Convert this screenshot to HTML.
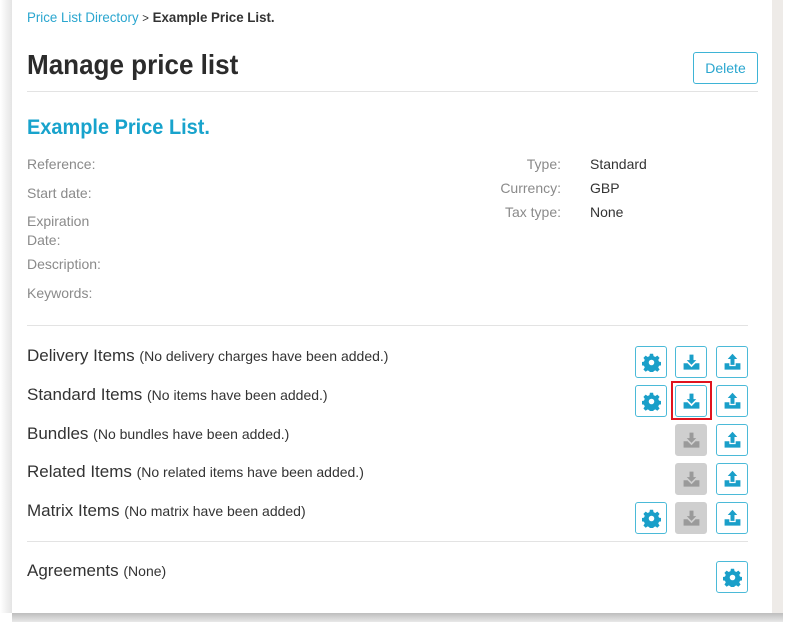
<!DOCTYPE html>
<html><head><meta charset="utf-8"><style>
*{margin:0;padding:0;box-sizing:border-box}
body{width:790px;height:630px;background:#fff;position:relative;overflow:hidden;font-family:"Liberation Sans Narrow","Liberation Sans",sans-serif;color:#333}
.lshadow{position:absolute;left:0;top:0;width:12px;height:613px;background:linear-gradient(90deg,#fff,#e4e4e4)}
.rgray{position:absolute;left:772px;top:0;width:11px;height:613px;background:#eeebe8}
.card{position:absolute;left:12px;top:0;width:760px;height:613px;background:#fff}
.bshadow{position:absolute;left:12px;top:613px;width:771px;height:9px;background:linear-gradient(#bdbdbd,#e8e8e8)}
.a{position:absolute;white-space:nowrap}
.lbl{color:#8a8a8a;font-size:14px}
.val{color:#333;font-size:14px}
.hr{position:absolute;height:1px;background:#e3e3e3}
.row{font-size:17px;color:#333}
.row small{font-size:14px}
.btn{position:absolute;width:32px;height:32px;border:1.5px solid #4bbad8;border-radius:3px;background:#fff;display:flex;align-items:center;justify-content:center}
.btn.dis{background:#cfcfcf;border-color:#cfcfcf}
.sx{transform-origin:0 0;transform:scaleX(.93)}
</style></head><body>
<div class="lshadow"></div><div class="rgray"></div><div class="card"></div><div class="bshadow"></div>
<svg width="0" height="0" style="position:absolute"><defs>
<symbol id="gear" viewBox="0 0 24 24"><path fill="currentColor" d="M10 1h4l.6 3 2.2 1 2.6-1.7 2.8 2.8-1.7 2.6 1 2.2 3 .6v4l-3 .6-1 2.2 1.7 2.6-2.8 2.8-2.6-1.7-2.2 1-.6 3h-4l-.6-3-2.2-1-2.6 1.7-2.8-2.8 1.7-2.6-1-2.2-3-.6v-4l3-.6 1-2.2-1.700-2.6 2.8-2.8 2.6 1.7 2.2-1zM12 8.5a3.5 3.5 0 1 0 0 7 3.5 3.5 0 1 0 0-7z"/></symbol>
<symbol id="dl" viewBox="0 0 24 24"><path fill="currentColor" d="M9.5 2h5v7h3.5l-6 6-6-6h3.5zM2 13h5l5 5 5-5h5v8H2zm14 5h1.5v1.2H16zm2.5 0H20v1.2h-1.5z"/></symbol>
<symbol id="ul" viewBox="0 0 24 24"><path fill="currentColor" d="M12 1l6 6.5h-3.5V15h-5V7.5H6zM2 13h6v3.5h8V13h6v8H2zm14 5h1.5v1.2H16zm2.5 0H20v1.2h-1.5z"/></symbol>
</defs></svg>
<div class="a sx" style="left:27px;top:9px;font-size:14px;transform:scaleX(.95)"><span style="color:#2aa6cf">Price List Directory</span> <span style="font-size:12px">&gt;</span> <b>Example Price List.</b></div>
<div class="a sx" style="left:27px;top:49px;font-size:28px;font-weight:bold;color:#2b2b2b">Manage price list</div>
<div class="a" style="left:693px;top:52px;width:65px;height:32px;border:1px solid #3eb4d6;border-radius:3px;color:#2aa6cf;font-size:14px;text-align:center;line-height:30px">Delete</div>
<div class="hr" style="left:27px;top:91px;width:731px"></div>
<div class="a sx" style="left:27px;top:116px;font-size:21px;font-weight:bold;color:#18a3cc;transform:scaleX(.95)">Example Price List.</div>
<div class="a lbl" style="left:27px;top:156px">Reference:</div>
<div class="a lbl" style="left:27px;top:185px">Start date:</div>
<div class="a lbl" style="left:27px;top:212px;line-height:19px">Expiration<br>Date:</div>
<div class="a lbl" style="left:27px;top:256px">Description:</div>
<div class="a lbl" style="left:27px;top:285px">Keywords:</div>
<div class="a lbl" style="left:440px;width:121px;text-align:right;top:156px">Type:</div>
<div class="a lbl" style="left:440px;width:121px;text-align:right;top:180px">Currency:</div>
<div class="a lbl" style="left:440px;width:121px;text-align:right;top:204px">Tax type:</div>
<div class="a val" style="left:590px;top:156px">Standard</div>
<div class="a val" style="left:590px;top:180px">GBP</div>
<div class="a val" style="left:590px;top:204px">None</div>
<div class="hr" style="left:27px;top:325px;width:721px"></div>
<div class="a row" style="left:27px;top:346px">Delivery Items <small>(No delivery charges have been added.)</small></div>
<div class="a row" style="left:27px;top:385px">Standard Items <small>(No items have been added.)</small></div>
<div class="a row" style="left:27px;top:424px">Bundles <small>(No bundles have been added.)</small></div>
<div class="a row" style="left:27px;top:462px">Related Items <small>(No related items have been added.)</small></div>
<div class="a row" style="left:27px;top:501px">Matrix Items <small>(No matrix have been added)</small></div>
<div class="hr" style="left:27px;top:541px;width:721px"></div>
<div class="a row" style="left:27px;top:561px">Agreements <small>(None)</small></div>

<div class="btn" style="left:635px;top:346px;color:#1a9fc9"><svg width="19" height="19"><use href="#gear"/></svg></div>
<div class="btn" style="left:675px;top:346px;color:#1a9fc9"><svg width="19" height="19"><use href="#dl"/></svg></div>
<div class="btn" style="left:716px;top:346px;color:#1a9fc9"><svg width="19" height="19"><use href="#ul"/></svg></div>
<div class="btn" style="left:635px;top:385px;color:#1a9fc9"><svg width="19" height="19"><use href="#gear"/></svg></div>
<div class="a" style="left:671px;top:381px;width:41px;height:39px;border:2px solid #e0141e"></div>
<div class="btn" style="left:675px;top:385px;color:#1a9fc9"><svg width="19" height="19"><use href="#dl"/></svg></div>
<div class="btn" style="left:716px;top:385px;color:#1a9fc9"><svg width="19" height="19"><use href="#ul"/></svg></div>
<div class="btn dis" style="left:675px;top:424px;color:#9a9a9a"><svg width="19" height="19"><use href="#dl"/></svg></div>
<div class="btn" style="left:716px;top:424px;color:#1a9fc9"><svg width="19" height="19"><use href="#ul"/></svg></div>
<div class="btn dis" style="left:675px;top:463px;color:#9a9a9a"><svg width="19" height="19"><use href="#dl"/></svg></div>
<div class="btn" style="left:716px;top:463px;color:#1a9fc9"><svg width="19" height="19"><use href="#ul"/></svg></div>
<div class="btn" style="left:635px;top:502px;color:#1a9fc9"><svg width="19" height="19"><use href="#gear"/></svg></div>
<div class="btn dis" style="left:675px;top:502px;color:#9a9a9a"><svg width="19" height="19"><use href="#dl"/></svg></div>
<div class="btn" style="left:716px;top:502px;color:#1a9fc9"><svg width="19" height="19"><use href="#ul"/></svg></div>
<div class="btn" style="left:716px;top:561px;color:#1a9fc9"><svg width="19" height="19"><use href="#gear"/></svg></div>
</body></html>
